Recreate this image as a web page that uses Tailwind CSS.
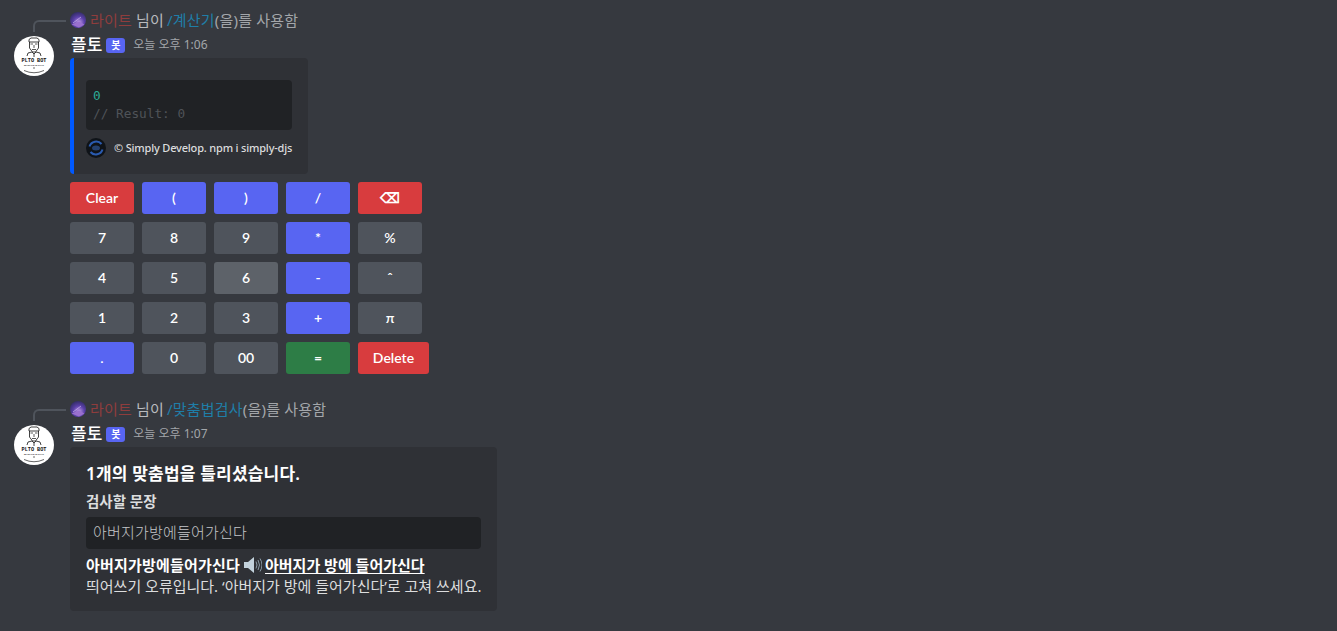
<!DOCTYPE html>
<html lang="ko">
<head>
  <meta charset="UTF-8">
  <title>Discord</title>
  <script src="https://cdn.jsdelivr.net/npm/@tailwindcss/browser@4"></script>
</head>
<body class="bg-[#36393f] w-[1337px] h-[631px] overflow-hidden font-['Noto_Sans','Noto_Sans_CJK_KR',sans-serif] text-[#dcddde]">
  <svg width="0" height="0" class="absolute">
    <defs>
      <radialGradient id="galaxy" cx="55%" cy="65%" r="70%">
        <stop offset="0%" stop-color="#c09be8"/>
        <stop offset="50%" stop-color="#5a3fa8"/>
        <stop offset="100%" stop-color="#2c2a5c"/>
      </radialGradient>
      <symbol id="bot-avatar" viewBox="0 0 40 40">
        <circle cx="20" cy="20" r="20" fill="#fff"/>
        <path d="M15 3.500l2-1.500h6l2 1.500v2.500h-10zM15.500 6v6l3 4h3l3-4V6" fill="none" stroke="#111" stroke-width=".8"/>
        <path d="M16.500 8h2.500M21 8h2.500M20 9v3M18 13.500h4" stroke="#111" stroke-width=".7"/>
        <path d="M13 20l1-3 4-1 2 2 2-2 4 1 1 3M20 18v3" fill="none" stroke="#111" stroke-width=".8"/>
        <text x="20" y="26" text-anchor="middle" font-family="Liberation Mono" font-size="5.200" font-weight="700" fill="#111">PLTO BOT</text>
        <text x="20" y="29.500" text-anchor="middle" font-family="Liberation Sans" font-size="2.400" font-weight="700" fill="#333">MANAGE &amp; CHAT</text>
        <circle cx="20" cy="32" r=".7" fill="#333"/>
        <path d="M10 34.500q10 4.500 20 0" fill="none" stroke="#666" stroke-width="1"/>
      </symbol>
      <symbol id="user-avatar" viewBox="0 0 16 16">
        <circle cx="8" cy="8" r="8" fill="url(#galaxy)"/>
        <path d="M1.500 12.500L9 9.500l5.500 3-5.500 3z" fill="#9a70cf"/>
        <path d="M3 11l8-6" stroke="#cdb6f0" stroke-width=".7"/>
      </symbol>
    </defs>
  </svg>

  <main class="flex flex-col pt-[11px] gap-[26px]">
    <!-- calculator -->
    <section class="relative pl-[70px]">
      <div class="absolute left-[33px] top-[9px] w-[33px] h-[12px] border-l-2 border-t-2 border-[#4f545c] rounded-tl-[6px]"></div>
      <svg class="absolute left-[14px] top-[25px] w-10 h-10"><use href="#bot-avatar"/></svg>
      <div class="flex items-center h-[18px] text-[15px] leading-[18px] tracking-[0.2px] text-[#b9bbbe] whitespace-nowrap">
        <svg class="w-4 h-4 mr-1 shrink-0"><use href="#user-avatar"/></svg>
        <span class="text-[#8f3d3d] mr-1">라이트</span>
        <span class="mr-[3px]">님이</span>
        <span class="text-[#1f7ea8]">/계산기</span>
        <span class="text-[#a3a6aa]">(을)를 사용함</span>
      </div>
      <div class="flex items-center h-[22px] mt-[5px] pl-px">
        <span class="text-[17px] leading-[22px] text-white font-medium">플토</span>
        <span class="ml-1 w-[19px] h-[15px] text-center rounded-[3px] bg-[#5865f2] text-white text-[10px] leading-[15px] font-semibold">봇</span>
        <span class="ml-2 text-[12px] leading-[22px] text-[#a3a6aa]">오늘 오후 1:06</span>
      </div>
      <div class="w-[238px] h-[116px] mt-[2px] bg-[#2f3136] rounded-[4px] border-l-4 border-[#0059ff] pl-[12px] pr-[16px] pt-[22px]">
        <div class="h-[50px] rounded-[4px] bg-[#202225] px-[7px] pt-[7px] font-['DejaVu_Sans_Mono','Liberation_Mono',monospace] text-[12.750px] leading-[18px]">
          <div class="text-[#2bab96]">0</div>
          <div class="text-[#4f5358]">// Result: 0</div>
        </div>
        <div class="flex items-center mt-[8px] h-[20px]">
          <svg class="w-5 h-5 mr-2 shrink-0" viewBox="0 0 20 20">
            <circle cx="10" cy="10" r="10" fill="#0f1318"/>
            <path d="M3.500 8.500A7 7 0 0 1 15.500 6M16.500 11.500A7 7 0 0 1 4.500 14" fill="none" stroke="#2a5bb0" stroke-width="2"/>
            <ellipse cx="10" cy="10" rx="4" ry="2.500" fill="#24406f"/>
          </svg>
          <span class="text-[11px] leading-[20px] tracking-[-0.18px] font-medium text-[#dcddde] whitespace-nowrap">© Simply Develop. npm i simply-djs</span>
        </div>
      </div>
      <div class="mt-2 flex flex-col gap-2 font-['Lato','Noto_Sans',sans-serif] text-[14px] leading-[32px] font-semibold text-white">
        <div class="flex gap-2">
          <button class="w-16 h-8 rounded-[3px] bg-[#d83c3e]">Clear</button>
          <button class="w-16 h-8 rounded-[3px] bg-[#5865f2]">(</button>
          <button class="w-16 h-8 rounded-[3px] bg-[#5865f2]">)</button>
          <button class="w-16 h-8 rounded-[3px] bg-[#5865f2]">/</button>
          <button class="w-16 h-8 rounded-[3px] bg-[#d83c3e]">⌫</button>
        </div>
        <div class="flex gap-2">
          <button class="w-16 h-8 rounded-[3px] bg-[#4f545c]">7</button>
          <button class="w-16 h-8 rounded-[3px] bg-[#4f545c]">8</button>
          <button class="w-16 h-8 rounded-[3px] bg-[#4f545c]">9</button>
          <button class="w-16 h-8 rounded-[3px] bg-[#5865f2]">*</button>
          <button class="w-16 h-8 rounded-[3px] bg-[#4f545c]">%</button>
        </div>
        <div class="flex gap-2">
          <button class="w-16 h-8 rounded-[3px] bg-[#4f545c]">4</button>
          <button class="w-16 h-8 rounded-[3px] bg-[#4f545c]">5</button>
          <button class="w-16 h-8 rounded-[3px] bg-[#5d6269]">6</button>
          <button class="w-16 h-8 rounded-[3px] bg-[#5865f2]">-</button>
          <button class="w-16 h-8 rounded-[3px] bg-[#4f545c]">ˆ</button>
        </div>
        <div class="flex gap-2">
          <button class="w-16 h-8 rounded-[3px] bg-[#4f545c]">1</button>
          <button class="w-16 h-8 rounded-[3px] bg-[#4f545c]">2</button>
          <button class="w-16 h-8 rounded-[3px] bg-[#4f545c]">3</button>
          <button class="w-16 h-8 rounded-[3px] bg-[#5865f2]">+</button>
          <button class="w-16 h-8 rounded-[3px] bg-[#4f545c]">π</button>
        </div>
        <div class="flex gap-2">
          <button class="w-16 h-8 rounded-[3px] bg-[#5865f2]">.</button>
          <button class="w-16 h-8 rounded-[3px] bg-[#4f545c]">0</button>
          <button class="w-16 h-8 rounded-[3px] bg-[#4f545c]">00</button>
          <button class="w-16 h-8 rounded-[3px] bg-[#2d7d46]">=</button>
          <button class="w-[71px] h-8 rounded-[3px] bg-[#d83c3e]">Delete</button>
        </div>
      </div>
    </section>

    <!-- spell check -->
    <section class="relative pl-[70px]">
      <div class="absolute left-[33px] top-[9px] w-[33px] h-[12px] border-l-2 border-t-2 border-[#4f545c] rounded-tl-[6px]"></div>
      <svg class="absolute left-[14px] top-[25px] w-10 h-10"><use href="#bot-avatar"/></svg>
      <div class="flex items-center h-[18px] text-[15px] leading-[18px] tracking-[0.2px] text-[#b9bbbe] whitespace-nowrap">
        <svg class="w-4 h-4 mr-1 shrink-0"><use href="#user-avatar"/></svg>
        <span class="text-[#8f3d3d] mr-1">라이트</span>
        <span class="mr-[3px]">님이</span>
        <span class="text-[#1f7ea8]">/맞춤법검사</span>
        <span class="text-[#a3a6aa]">(을)를 사용함</span>
      </div>
      <div class="flex items-center h-[22px] mt-[5px] pl-px">
        <span class="text-[17px] leading-[22px] text-white font-medium">플토</span>
        <span class="ml-1 w-[19px] h-[15px] text-center rounded-[3px] bg-[#5865f2] text-white text-[10px] leading-[15px] font-semibold">봇</span>
        <span class="ml-2 text-[12px] leading-[22px] text-[#a3a6aa]">오늘 오후 1:07</span>
      </div>
      <div class="w-[427px] h-[164px] mt-[2px] bg-[#2f3136] rounded-[4px] px-4 pt-4">
        <h2 class="text-[17px] leading-[22px] tracking-[0.2px] font-semibold text-white">1개의 맞춤법을 틀리셨습니다.</h2>
        <h3 class="mt-[7px] text-[14.500px] leading-[18px] font-semibold text-[#dcddde]">검사할 문장</h3>
        <div class="mt-[7px] h-8 rounded-[4px] bg-[#202225] px-[7px] text-[15px] tracking-[0.2px] leading-[30px] text-[#c4c6c9] font-light">아버지가방에들어가신다</div>
        <p class="mt-[6px] flex items-center h-[20px] text-[15px] tracking-[0.2px] leading-[20px] font-semibold text-white whitespace-nowrap">
          아버지가방에들어가신다
          <svg class="w-[19px] h-[18px] mx-[3px]" viewBox="0 0 19 18">
            <path d="M1 6h4l6-5v16l-6-5H1z" fill="#c3d2dc"/>
            <path d="M13 5.500q2 3.500 0 7M15 4q3 5 0 10M17 2.500q4 6.500 0 13" fill="none" stroke="#8a9aa5" stroke-width="1"/>
          </svg>
          <span class="underline underline-offset-2 tracking-normal">아버지가 방에 들어가신다</span>
        </p>
        <p class="mt-px text-[15px] leading-[20px] text-[#dcddde] whitespace-nowrap">띄어쓰기 오류입니다. ‘아버지가 방에 들어가신다’로 고쳐 쓰세요.</p>
      </div>
    </section>
  </main>
</body>
</html>
